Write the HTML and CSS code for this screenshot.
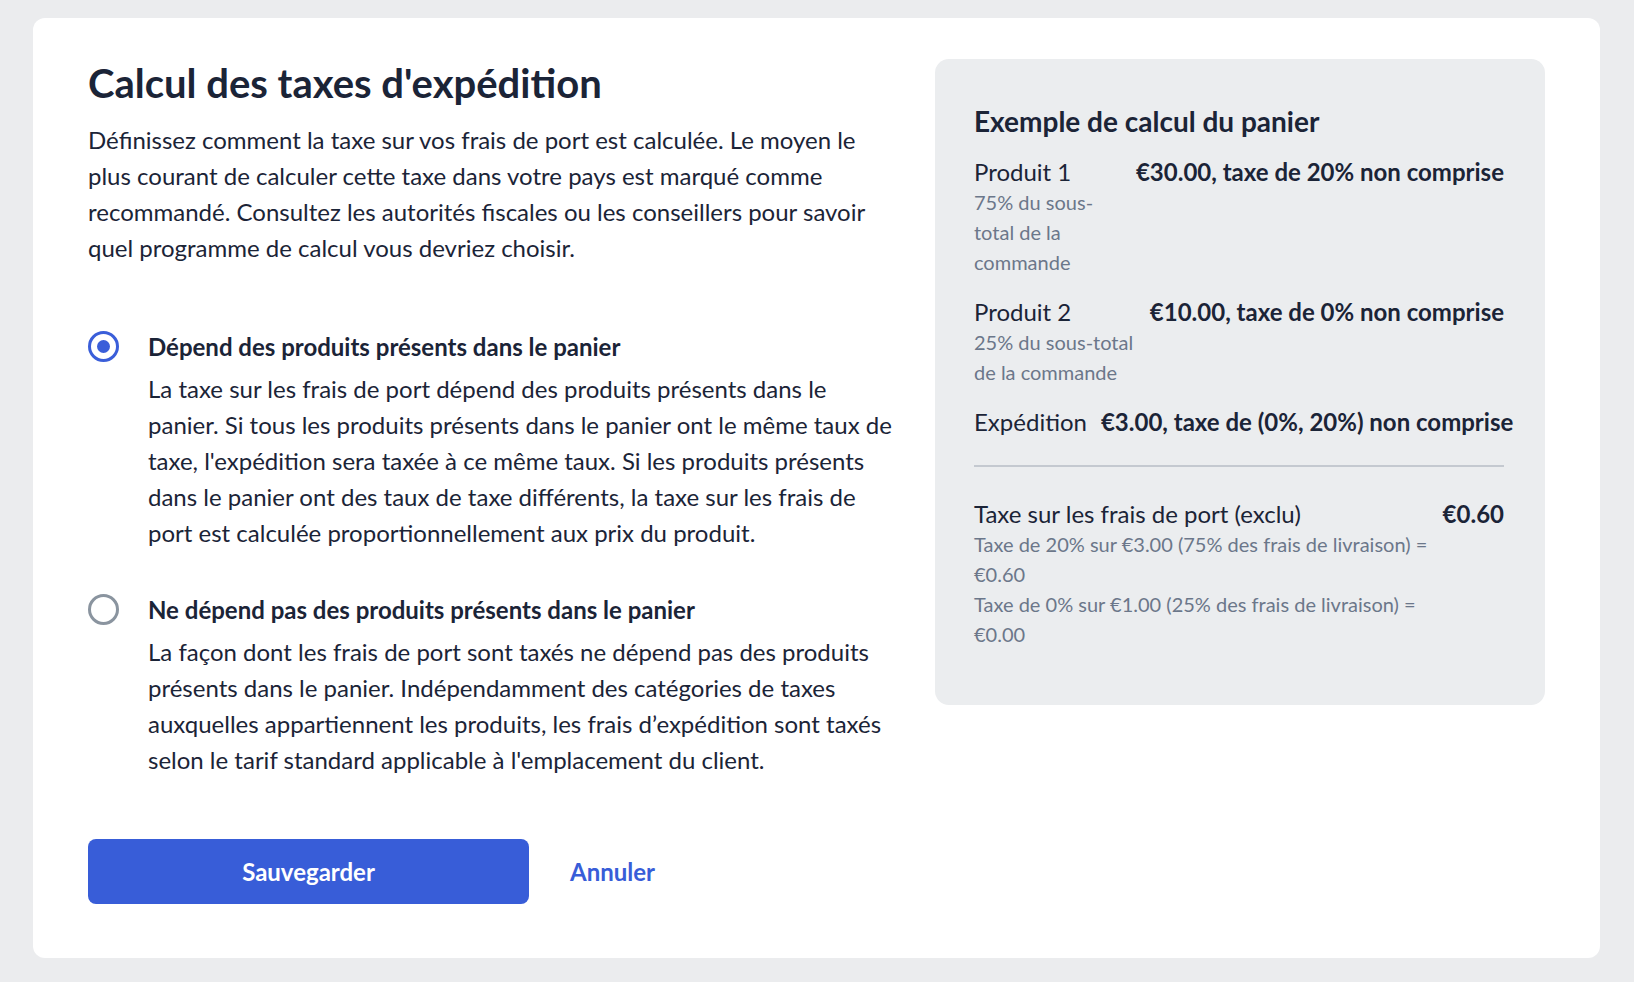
FILE: index.html
```html
<!DOCTYPE html>
<html lang="fr">
<head>
<meta charset="utf-8">
<title>Calcul des taxes d'expédition</title>
<link rel="stylesheet" href="styles.css">
</head>
<body>
<div class="card">
  <div class="main">
    <h1 class="title">Calcul des taxes d'expédition</h1>
    <p class="intro">Définissez comment la taxe sur vos frais de port est calculée. Le moyen le plus courant de calculer cette taxe dans votre pays est marqué comme recommandé. Consultez les autorités fiscales ou les conseillers pour savoir quel programme de calcul vous devriez choisir.</p>
    <div class="options">
      <div class="option">
        <span class="radio radio-checked"><span class="radio-dot"></span></span>
        <div class="option-body">
          <div class="option-title">Dépend des produits présents dans le panier</div>
          <p class="option-desc">La taxe sur les frais de port dépend des produits présents dans le panier. Si tous les produits présents dans le panier ont le même taux de taxe, l'expédition sera taxée à ce même taux. Si les produits présents dans le panier ont des taux de taxe différents, la taxe sur les frais de port est calculée proportionnellement aux prix du produit.</p>
        </div>
      </div>
      <div class="option">
        <span class="radio"></span>
        <div class="option-body">
          <div class="option-title">Ne dépend pas des produits présents dans le panier</div>
          <p class="option-desc">La façon dont les frais de port sont taxés ne dépend pas des produits présents dans le panier. Indépendamment des catégories de taxes auxquelles appartiennent les produits, les frais d’expédition sont taxés selon le tarif standard applicable à l'emplacement du client.</p>
        </div>
      </div>
    </div>
    <div class="actions">
      <button class="btn-primary" type="button">Sauvegarder</button>
      <a class="btn-link" href="#">Annuler</a>
    </div>
  </div>
  <aside class="example">
    <h2 class="example-title">Exemple de calcul du panier</h2>
    <div class="row">
      <div class="row-label">
        <div class="row-name">Produit 1</div>
        <div class="row-sub">75% du sous-total de la commande</div>
      </div>
      <div class="row-value">€30.00, taxe de 20% non comprise</div>
    </div>
    <div class="row">
      <div class="row-label">
        <div class="row-name">Produit 2</div>
        <div class="row-sub">25% du sous-total de la commande</div>
      </div>
      <div class="row-value">€10.00, taxe de 0% non comprise</div>
    </div>
    <div class="row row-tight">
      <div class="row-label">
        <div class="row-name">Expédition</div>
      </div>
      <div class="row-value">€3.00, taxe de (0%, 20%) non comprise</div>
    </div>
    <hr class="divider">
    <div class="row row-total">
      <div class="row-label">
        <div class="row-name">Taxe sur les frais de port (exclu)</div>
        <div class="row-sub">Taxe de 20% sur €3.00 (75% des frais de livraison) = €0.60</div>
        <div class="row-sub">Taxe de 0% sur €1.00 (25% des frais de livraison) = €0.00</div>
      </div>
      <div class="row-value">€0.60</div>
    </div>
  </aside>
</div>
</body>
</html>
```

FILE: styles.css
```css
* {
  box-sizing: border-box;
}

html, body {
  margin: 0;
  padding: 0;
}

body {
  background: #ebecee;
  font-family: Lato, "Liberation Sans", sans-serif;
  color: #1b2437;
  padding: 18px 34px 24px 33px;
}

.card {
  background: #ffffff;
  border-radius: 12px;
  padding: 41px 55px 54px;
  display: grid;
  grid-template-columns: 1fr 610px;
  column-gap: 40px;
  align-items: start;
}

.title {
  margin: 0;
  font-size: 40px;
  line-height: 48px;
  font-weight: 700;
}

.intro {
  margin: 15px 0 0;
  font-size: 24px;
  line-height: 36px;
}

.options {
  margin-top: 63px;
  display: flex;
  flex-direction: column;
  gap: 41px;
}

.option {
  display: flex;
  align-items: flex-start;
  gap: 29px;
}

.radio {
  flex: none;
  width: 31px;
  height: 31px;
  margin-top: 2px;
  border-radius: 50%;
  border: 3px solid #8a949f;
  display: flex;
  align-items: center;
  justify-content: center;
}

.radio-checked {
  border-color: #3a5ed9;
}

.radio-dot {
  width: 13px;
  height: 13px;
  border-radius: 50%;
  background: #3a5ed9;
}

.option-title {
  font-size: 24px;
  line-height: 36px;
  font-weight: 700;
}

.option-desc {
  margin: 6px 0 0;
  font-size: 24px;
  line-height: 36px;
}

.actions {
  margin-top: 61px;
  display: flex;
  align-items: center;
  gap: 41px;
}

.btn-primary {
  width: 441px;
  height: 65px;
  border: none;
  border-radius: 8px;
  background: #385dd8;
  color: #ffffff;
  font-family: Lato, "Liberation Sans", sans-serif;
  font-size: 24px;
  font-weight: 700;
  cursor: pointer;
}

.btn-link {
  color: #385dd8;
  font-size: 24px;
  font-weight: 700;
  text-decoration: none;
}

.example {
  background: #ebedef;
  border-radius: 14px;
  padding: 44px 41px 56px 39px;
}

.example-title {
  margin: 0 0 18px;
  font-size: 28px;
  line-height: 36px;
  font-weight: 700;
}

.row {
  display: flex;
  justify-content: space-between;
  align-items: flex-start;
  gap: 16px;
  margin-bottom: 20px;
}

.row-tight {
  gap: 14px;
  margin-bottom: 0;
}

.row-total {
  gap: 12px;
  margin-bottom: 0;
}

.row-label {
  flex: 0 1 auto;
}

.row-name {
  font-size: 24px;
  line-height: 30px;
}

.row-sub {
  font-size: 20px;
  line-height: 30px;
  color: #6b778a;
}

.row-value {
  flex: none;
  font-size: 24px;
  line-height: 30px;
  font-weight: 700;
  white-space: nowrap;
}

.divider {
  border: none;
  height: 2px;
  background: #c4c9d0;
  margin: 28px 0 32px;
}
```
